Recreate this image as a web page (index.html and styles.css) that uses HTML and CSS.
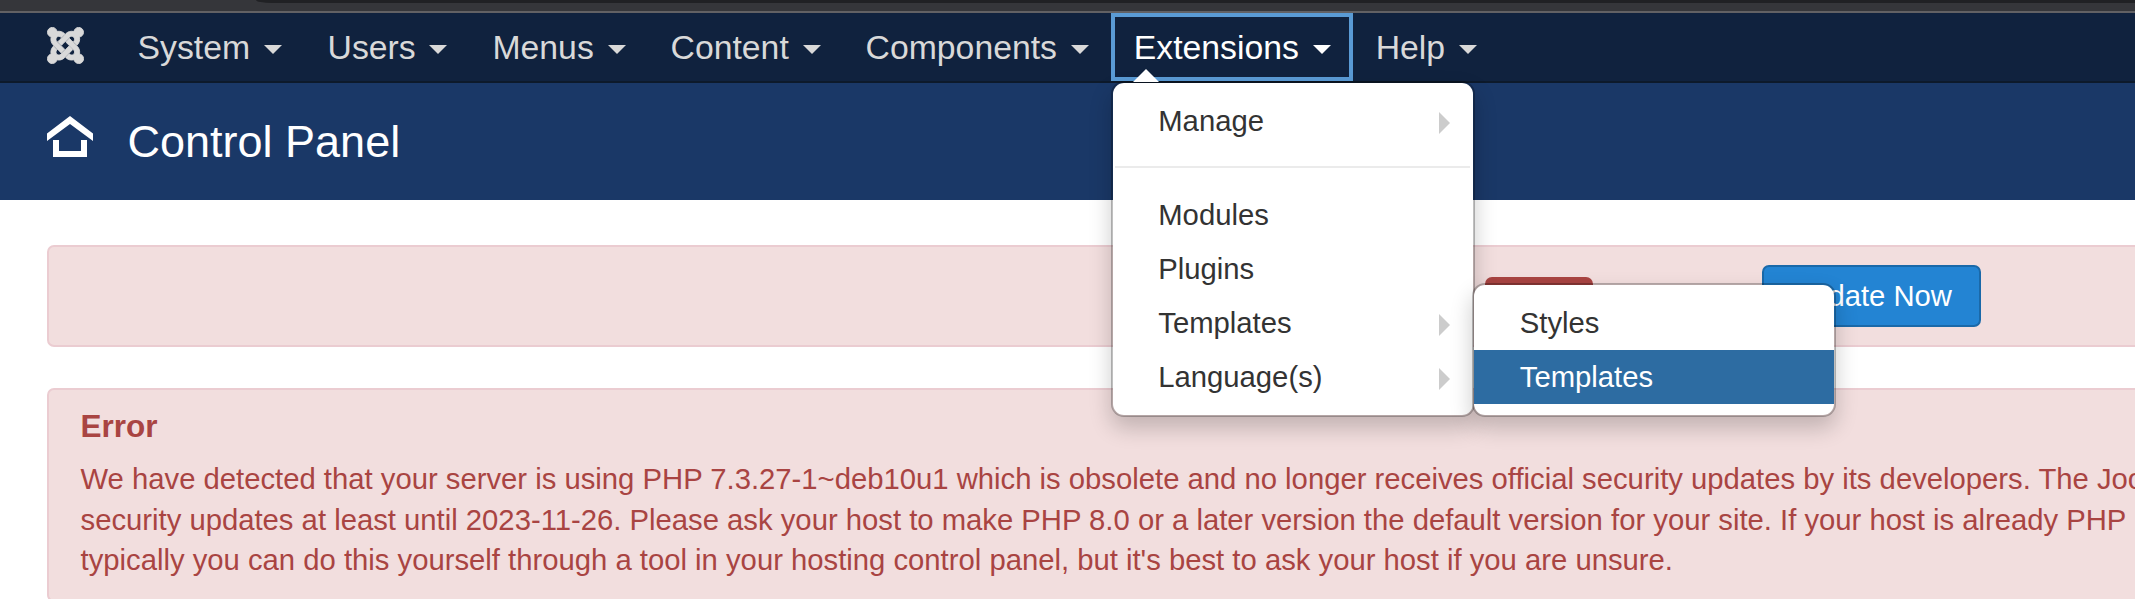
FILE: index.html
```html
<!DOCTYPE html>
<html lang="en">
<head>
<meta charset="utf-8">
<title>Control Panel</title>
<link rel="stylesheet" href="styles.css">
</head>
<body>
<div class="browser-edge"><div class="browser-field"></div></div>
<nav class="navbar">
  <a class="brand"><svg viewBox="-5 27 458 458" width="37" height="37"><path fill="currentColor" stroke="currentColor" stroke-width="11" d="M.6 92.1C.6 58.8 27.4 32 60.4 32c30 0 54.5 21.9 59.2 50.2 32.6-7.6 67.1.6 96.5 30l-44.3 44.3c-20.5-20.5-42.6-16.3-55.4-3.5-14.3 14.3-14.3 37.9 0 52.2l99.5 99.5-44 44.3c-87.7-87.2-49.7-49.7-99.8-99.7-26.8-26.5-35-64.8-24.8-98.9C20.4 144.6.6 120.7.6 92.1zm129.5 116.4l44.3 44.3c10-10 89.7-89.7 99.7-99.8 14.3-14.3 37.6-14.3 51.9 0 12.8 12.8 17 35-3.5 55.4l44 44.3c31.2-31.2 38.5-67.6 28.9-101.2 29.2-4.1 51.9-29.2 51.9-59.5 0-33.2-26.8-60.1-59.8-60.1-30.3 0-55.4 22.5-59.5 51.6-33.8-9.9-71.7-1.5-98.3 25.1-18.3 19.1-71.1 71.5-99.6 99.9zm266.3 152.2c8.2-32.7-.9-68.5-26.3-93.9-11.8-12.2 5 4.7-99.5-99.7l-44.3 44.3 99.7 99.7c14.3 14.3 14.3 37.6 0 51.9-12.8 12.8-35 17-55.4-3.5l-44 44.3c27.6 30.2 68 38.8 102.7 28 5.5 27.4 29.7 48.1 58.9 48.1 33 0 59.8-26.8 59.8-60.1 0-30.2-22.5-55-51.6-59.1zm-84.3-53.1l-44-44.3c-87 86.4-50.4 50.4-99.7 99.8-14.3 14.3-37.6 14.3-51.9 0-13.1-13.4-16.9-35.3 3.2-55.4l-44-44.3c-30.2 30.2-38 65.2-29.5 98.3-26.7 6-46.2 29.9-46.2 58.2C0 453.2 26.8 480 59.8 480c28.6 0 52.5-19.8 58.6-46.7 32.7 8.2 68.5-.6 94.2-26 32.1-32 12.2-12.4 99.5-99.7z"/></svg></a>
  <div class="nav-item system"><span>System</span><i class="caret"></i></div>
  <div class="nav-item"><span>Users</span><i class="caret"></i></div>
  <div class="nav-item"><span>Menus</span><i class="caret"></i></div>
  <div class="nav-item"><span>Content</span><i class="caret"></i></div>
  <div class="nav-item"><span>Components</span><i class="caret"></i></div>
  <div class="nav-item open"><span>Extensions</span><i class="caret"></i>
    <div class="dropdown">
      <div class="row"><span>Manage</span><i class="arrow"></i></div>
      <div class="divider"></div>
      <div class="row"><span>Modules</span></div>
      <div class="row"><span>Plugins</span></div>
      <div class="row parent"><span>Templates</span><i class="arrow"></i>
        <div class="dropdown submenu">
          <div class="row"><span>Styles</span></div>
          <div class="row selected"><span>Templates</span></div>
        </div>
      </div>
      <div class="row"><span>Language(s)</span><i class="arrow"></i></div>
    </div>
  </div>
  <div class="nav-item"><span>Help</span><i class="caret"></i></div>
</nav>
<header class="header">
  <svg class="home" viewBox="0 0 46 41" width="46" height="41"><path fill="#fff" d="M0 17.5 23 0l23 17.5V25L23 8 0 25zM6 24h6v11h22V24h6v17H6z"/></svg>
  <h1>Control Panel</h1>
</header>
<main class="content">
  <section class="alert update">
    <span class="label"></span>
    <button class="btn">Update Now</button>
  </section>
  <section class="alert error">
    <h4>Error</h4>
    <p>We have detected that your server is using PHP 7.3.27-1~deb10u1 which is obsolete and no longer receives official security updates by its developers. The Joo<br>security updates at least until 2023-11-26. Please ask your host to make PHP 8.0 or a later version the default version for your site. If your host is already PHP<br>typically you can do this yourself through a tool in your hosting control panel, but it's best to ask your host if you are unsure.</p>
  </section>
</main>
</body>
</html>
```
FILE: styles.css
```css
* { box-sizing: border-box; }
html, body { margin: 0; height: 599px; overflow: hidden; }
body {
  background: #fff;
  font-family: "Liberation Sans", Arial, sans-serif;
  font-size: 29.25px;
  line-height: 40.5px;
  color: #333;
}
.browser-edge {
  height: 13px;
  background: #35363a;
  border-bottom: 2px solid #626164;
  padding-left: 256px;
}
.browser-field { height: 3px; background: #202124; border-bottom-left-radius: 16px 3px; }
.navbar {
  display: flex;
  height: 70px;
  padding-left: 47px;
  background: #10223e;
  border-bottom: 2px solid #0d1a2b;
  color: #d9d9d9;
}
.brand { width: 67px; padding-top: 14px; display: block; }
.brand svg { display: block; }
.nav-item {
  position: relative;
  display: flex;
  align-items: center;
  height: 68px;
  padding: 0 22.5px;
  font-size: 33.75px;
}
.nav-item.system { padding: 0 23.2px 0 23.5px; }
.caret {
  margin: 5px 0 0 13.8px;
  border: 9px solid transparent;
  border-top-color: currentColor;
  border-bottom: 0;
}
.nav-item.open { color: #fff; outline: 4px solid #5a9bd5; outline-offset: -4px; }
.dropdown {
  position: absolute;
  z-index: 10;
  left: 0;
  top: 68px;
  width: 364px;
  padding: 11px 0;
  background: #fff;
  background-clip: padding-box;
  border: 2px solid rgba(0, 0, 0, .25);
  border-radius: 13px;
  box-shadow: 0 11px 22px rgba(0, 0, 0, .2);
  font-size: 29.25px;
  color: #333;
}
.nav-item.open > .dropdown::before {
  content: "";
  position: absolute;
  left: 20px;
  top: -14px;
  border: 13px solid transparent;
  border-bottom-color: #fff;
  border-top: 0;
}
.row {
  display: flex;
  align-items: center;
  justify-content: space-between;
  height: 54px;
  padding: 0 23px 0 45px;
}
.row.parent { position: relative; }
.arrow {
  margin-top: 4px;
  border: 11px solid transparent;
  border-left-color: #ccc;
  border-right: 0;
}
.divider { height: 2px; margin: 18px 3px 20px 2px; background: #ebebeb; }
.submenu { left: 359px; top: -13px; }
.submenu .row { padding-left: 45.5px; }
.row.selected { background: #2d6ca2; color: #fff; }
.header {
  display: flex;
  align-items: center;
  gap: 34.5px;
  height: 117px;
  padding-left: 47px;
  background: #1a3867;
  color: #fff;
}
.home { display: block; margin-top: -11px; }
.header h1 { margin: 0; font-size: 45px; font-weight: 400; line-height: 45px; }
.content { padding: 45px 0 0 47px; width: 2200px; }
.alert {
  background: #f2dede;
  border: 2px solid #ebccd1;
  border-radius: 7px;
  color: #a94442;
}
.alert.update {
  display: flex;
  align-items: flex-start;
  height: 102px;
  padding: 18px 0 0 1436px;
}
.label {
  width: 108px;
  height: 34px;
  margin: 12px 169px 0 0;
  background: #a94442;
  border-radius: 7px;
}
.btn {
  width: 219px;
  height: 62px;
  padding: 0;
  background: #2384d3;
  border: 2px solid #1a69a9;
  border-radius: 7px;
  color: #fff;
  font: 29.25px/40px "Liberation Sans", Arial, sans-serif;
}
.alert.error { height: 214px; margin-top: 41px; padding: 14px 31.5px; white-space: nowrap; }
.error h4 { margin: 0 0 10px; font-size: 31.5px; line-height: 45px; }
.error p { margin: 0; }
```
